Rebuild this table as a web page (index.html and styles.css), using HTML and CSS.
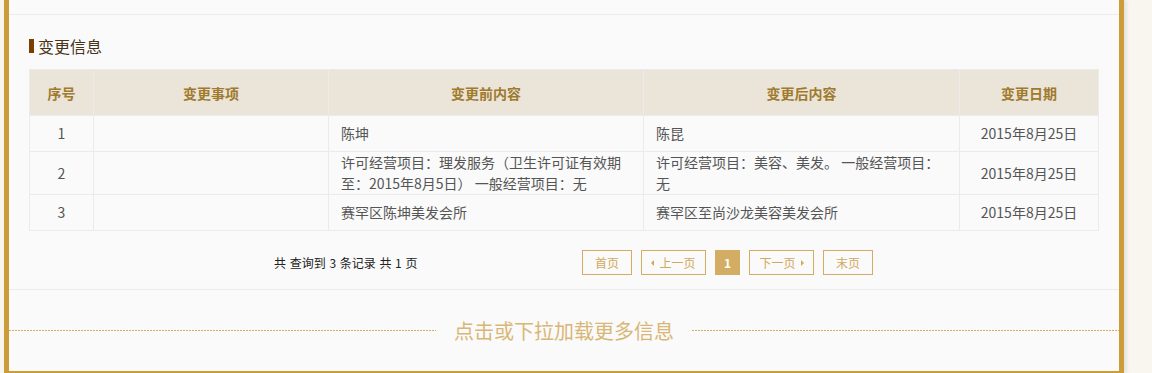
FILE: index.html
```html
<!DOCTYPE html>
<html lang="zh-CN">
<head>
<meta charset="utf-8">
<title>变更信息</title>
<link rel="stylesheet" href="styles.css">
</head>
<body>
<div class="panel">
  <div class="prev-section"></div>
  <div class="section">
    <h3 class="title"><span class="title-bar"></span>变更信息</h3>
    <table class="change-table">
      <colgroup>
        <col class="c-no"><col class="c-item"><col class="c-before"><col class="c-after"><col class="c-date">
      </colgroup>
      <thead>
        <tr><th>序号</th><th>变更事项</th><th>变更前内容</th><th>变更后内容</th><th>变更日期</th></tr>
      </thead>
      <tbody>
        <tr><td class="center">1</td><td></td><td>陈坤</td><td>陈昆</td><td class="center">2015年8月25日</td></tr>
        <tr><td class="center">2</td><td></td><td>许可经营项目：理发服务（卫生许可证有效期至：2015年8月5日） 一般经营项目：无</td><td>许可经营项目：美容、美发。 一般经营项目：无</td><td class="center">2015年8月25日</td></tr>
        <tr><td class="center">3</td><td></td><td>赛罕区陈坤美发会所</td><td>赛罕区至尚沙龙美容美发会所</td><td class="center">2015年8月25日</td></tr>
      </tbody>
    </table>
    <div class="pager">
      <span class="total">共 查询到 3 条记录 共 1 页</span>
      <div class="pages">
        <a class="pg w50">首页</a>
        <a class="pg w65"><span class="arr-left"></span>上一页</a>
        <a class="pg cur">1</a>
        <a class="pg w65">下一页<span class="arr-right"></span></a>
        <a class="pg w50">末页</a>
      </div>
    </div>
  </div>
  <div class="load-more">
    <span class="dash"></span>
    <span class="load-text">点击或下拉加载更多信息</span>
    <span class="dash"></span>
  </div>
</div>
</body>
</html>
```

FILE: styles.css
```css
html, body {
  margin: 0;
  padding: 0;
}
body {
  background: #f9f6ef;
  font-family: "Noto Sans CJK SC", "Noto Sans", sans-serif;
  height: 373px;
  overflow: hidden;
}
.panel {
  margin-left: 4px;
  width: 1110px;
  background: #fafafa;
  border-left: 5px solid #cc9c39;
  border-right: 5px solid #cc9c39;
  border-bottom: 2px solid #cc9c39;
  box-shadow: 3px 0 3px rgba(0, 0, 0, 0.07);
}
.prev-section {
  height: 14px;
  border-bottom: 1px solid #ececec;
}
.section {
  padding: 23px 21px 0 20px;
  border-bottom: 1px solid #ececec;
}
.title {
  margin: 0 0 15px 0;
  height: 16px;
  display: flex;
  align-items: center;
  gap: 4px;
  font-size: 16px;
  font-weight: normal;
  line-height: 16px;
  color: #4a3418;
}
.title-bar {
  width: 5px;
  height: 14px;
  background: #7a3e04;
}
.change-table {
  width: 1069px;
  border-collapse: collapse;
  table-layout: fixed;
  font-size: 14px;
  color: #555;
}
.c-no { width: 64px; }
.c-item { width: 235px; }
.c-before { width: 315px; }
.c-after { width: 316px; }
.c-date { width: 139px; }
.change-table th,
.change-table td {
  border: 1px solid #ebebeb;
}
.change-table th {
  height: 45px;
  padding: 0;
  background: #eae4d9;
  color: #a07a2c;
  font-weight: bold;
  text-align: center;
}
.change-table td {
  height: 35px;
  padding: 0 12px;
  line-height: 21px;
  text-align: left;
  vertical-align: middle;
  background: #fafafa;
}
.change-table td.center {
  text-align: center;
}
.pager {
  display: flex;
  align-items: center;
  height: 25px;
  padding: 19px 0 14px 0;
}
.total {
  width: 308px;
  padding-left: 245px;
  font-size: 12px;
  color: #222;
  white-space: nowrap;
  word-spacing: 1px;
}
.pages {
  display: flex;
  gap: 9px;
}
.pg {
  box-sizing: border-box;
  height: 25px;
  display: inline-flex;
  align-items: center;
  justify-content: center;
  gap: 5px;
  border: 1px solid #d3ad63;
  font-size: 12px;
  color: #d0a95d;
  background: #fafafa;
}
.w50 { width: 50px; }
.w65 { width: 65px; }
.pg.cur {
  width: 25px;
  background: #d3ad63;
  color: #fff;
  font-weight: bold;
}
.arr-left {
  width: 0;
  height: 0;
  border-top: 3px solid transparent;
  border-bottom: 3px solid transparent;
  border-right: 3px solid #d0a95d;
}
.arr-right {
  width: 0;
  height: 0;
  border-top: 3px solid transparent;
  border-bottom: 3px solid transparent;
  border-left: 3px solid #d0a95d;
}
.load-more {
  height: 81px;
  display: flex;
  align-items: center;
  gap: 18px;
}
.dash {
  flex: 1;
  height: 1px;
  background: repeating-linear-gradient(to right, #d2ad66 0 2px, transparent 2px 3px);
}
.load-text {
  font-size: 20px;
  color: #d8b776;
  line-height: 24px;
}
```
